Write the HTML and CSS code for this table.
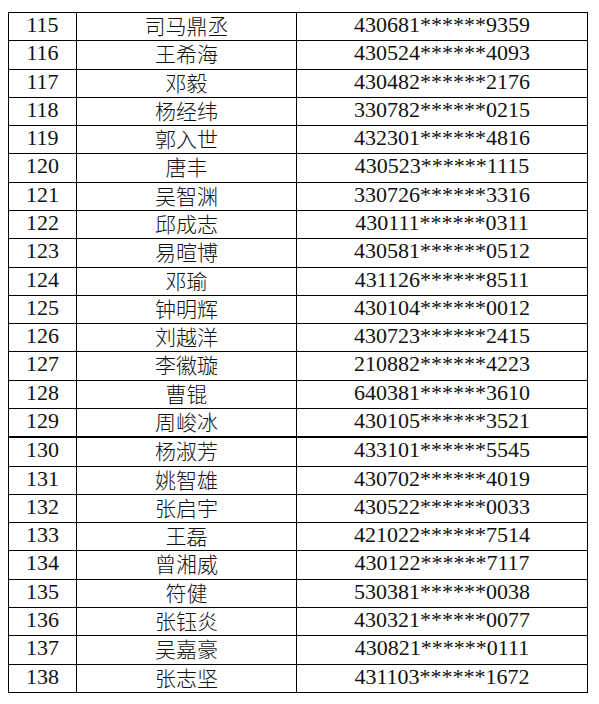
FILE: index.html
```html
<!DOCTYPE html>
<html lang="zh">
<head>
<meta charset="utf-8">
<link rel="stylesheet" href="styles.css">
</head>
<body>
<table class="list">
<colgroup><col class="c-no"><col class="c-name"><col class="c-id"></colgroup>
<tbody>
<tr><td class="no">115</td><td class="name">司马鼎丞</td><td class="id">430681******9359</td></tr>
<tr><td class="no">116</td><td class="name">王希海</td><td class="id">430524******4093</td></tr>
<tr><td class="no">117</td><td class="name">邓毅</td><td class="id">430482******2176</td></tr>
<tr><td class="no">118</td><td class="name">杨经纬</td><td class="id">330782******0215</td></tr>
<tr><td class="no">119</td><td class="name">郭入世</td><td class="id">432301******4816</td></tr>
<tr><td class="no">120</td><td class="name">唐丰</td><td class="id">430523******1115</td></tr>
<tr><td class="no">121</td><td class="name">吴智渊</td><td class="id">330726******3316</td></tr>
<tr><td class="no">122</td><td class="name">邱成志</td><td class="id">430111******0311</td></tr>
<tr><td class="no">123</td><td class="name">易暄博</td><td class="id">430581******0512</td></tr>
<tr><td class="no">124</td><td class="name">邓瑜</td><td class="id">431126******8511</td></tr>
<tr><td class="no">125</td><td class="name">钟明辉</td><td class="id">430104******0012</td></tr>
<tr><td class="no">126</td><td class="name">刘越洋</td><td class="id">430723******2415</td></tr>
<tr><td class="no">127</td><td class="name">李徽璇</td><td class="id">210882******4223</td></tr>
<tr><td class="no">128</td><td class="name">曹锟</td><td class="id">640381******3610</td></tr>
<tr><td class="no">129</td><td class="name">周峻冰</td><td class="id">430105******3521</td></tr>
<tr class="thick"><td class="no">130</td><td class="name">杨淑芳</td><td class="id">433101******5545</td></tr>
<tr><td class="no">131</td><td class="name">姚智雄</td><td class="id">430702******4019</td></tr>
<tr><td class="no">132</td><td class="name">张启宇</td><td class="id">430522******0033</td></tr>
<tr><td class="no">133</td><td class="name">王磊</td><td class="id">421022******7514</td></tr>
<tr><td class="no">134</td><td class="name">曾湘威</td><td class="id">430122******7117</td></tr>
<tr><td class="no">135</td><td class="name">符健</td><td class="id">530381******0038</td></tr>
<tr><td class="no">136</td><td class="name">张钰炎</td><td class="id">430321******0077</td></tr>
<tr><td class="no">137</td><td class="name">吴嘉豪</td><td class="id">430821******0111</td></tr>
<tr><td class="no">138</td><td class="name">张志坚</td><td class="id">431103******1672</td></tr>
</tbody>
</table>
</body>
</html>
```

FILE: styles.css
```css
html, body {
  margin: 0;
  padding: 0;
  background: #fff;
}
body {
  padding: 12px 0 0 8px;
}
.list {
  border-collapse: collapse;
  table-layout: fixed;
  width: 579px;
  height: 681px;
  color: #111;
}
.c-no { width: 68px; }
.c-name { width: 220px; }
.c-id { width: 291px; }
.list td {
  border: 1px solid #000;
  padding: 0;
  text-align: center;
  vertical-align: top;
  white-space: nowrap;
}
.no, .id {
  font-family: "Liberation Serif", serif;
  font-size: 22px;
  line-height: 24px;
  padding-top: 5px;
}
.name {
  font-family: "Noto Sans CJK SC", sans-serif;
  font-size: 21px;
  font-weight: 300;
  line-height: 24px;
  padding-top: 3px;
}
.thick td {
  border-top: 2px solid #000;
}
```
